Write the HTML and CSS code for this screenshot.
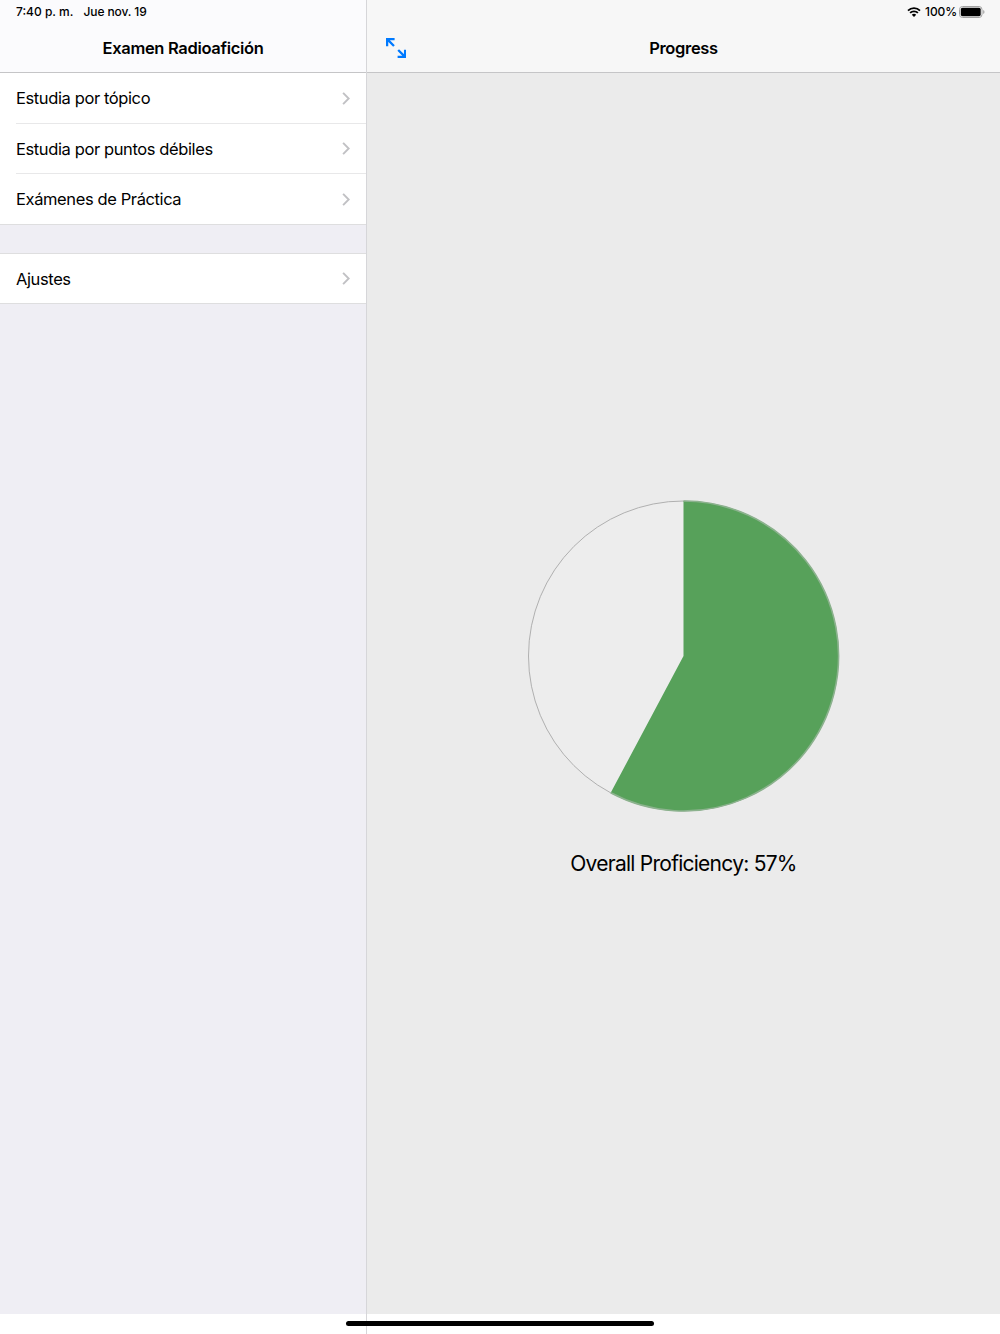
FILE: index.html
```html
<!DOCTYPE html>
<html lang="es">
<head>
<meta charset="utf-8">
<title>Examen Radioafición</title>
<link rel="stylesheet" href="styles.css">
</head>
<body>
<div class="app">
  <aside class="sidebar">
    <header class="bar">
      <div class="status"><span class="time">7:40 p. m.</span><span class="date">Jue nov. 19</span></div>
      <h1 class="title">Examen Radioafición</h1>
    </header>
    <nav class="menu">
      <ul class="group">
        <li class="row first"><span>Estudia por tópico</span><svg class="chevron" viewBox="0 0 8 13"><path d="M1.1.9 6.7 6.5 1.1 12.1"/></svg></li>
        <li class="row"><span>Estudia por puntos débiles</span><svg class="chevron" viewBox="0 0 8 13"><path d="M1.1.9 6.7 6.5 1.1 12.1"/></svg></li>
        <li class="row"><span>Exámenes de Práctica</span><svg class="chevron" viewBox="0 0 8 13"><path d="M1.1.9 6.7 6.5 1.1 12.1"/></svg></li>
      </ul>
      <ul class="group settings">
        <li class="row"><span>Ajustes</span><svg class="chevron" viewBox="0 0 8 13"><path d="M1.1.9 6.7 6.5 1.1 12.1"/></svg></li>
      </ul>
    </nav>
  </aside>
  <main class="detail">
    <header class="bar">
      <div class="status status-right">
        <svg class="wifi" viewBox="0 0 14 10"><path d="M1 3.7a8.5 8.5 0 0 1 12 0M3.1 5.9a5.5 5.5 0 0 1 7.8 0" fill="none" stroke="#000" stroke-width="1.8"/><path d="M7 10 4.8 7.8a3.1 3.1 0 0 1 4.4 0z"/></svg>
        <span class="charge">100%</span>
        <svg class="battery" viewBox="0 0 26 12"><rect x=".5" y=".5" width="22.5" height="11" rx="3" fill="none" stroke="#a2a2a2"/><rect x="1.8" y="1.8" width="19.9" height="8.4" rx="1.6"/><path d="M24.2 4v4q1.3-.6 1.3-2t-1.3-2" fill="#a2a2a2"/></svg>
      </div>
      <div class="toolbar">
        <svg class="expand" viewBox="0 0 20 20"><path d="M1.1 8.3V1.1H8.6M1.4 1.4 8 8M19.1 11.7v7.2h-7.5M18.8 18.6 12.2 12"/></svg>
        <h2 class="title">Progress</h2>
      </div>
    </header>
    <section class="content">
      <svg class="pie" viewBox="-155.5 -156 312 312">
        <circle r="155" fill="#ededed" stroke="#b0b0b0" cx="0"/>
        <path d="M0 0V-155A155 155 0 1 1-72.8 136.8Z" fill="#57a15a"/>
        <path d="M0-155A155 155 0 1 1-72.8 136.8" fill="none" stroke="#8bb28d" stroke-width="1.6"/>
      </svg>
      <p class="score">Overall Proficiency: 57%</p>
    </section>
  </main>
  <div class="home"></div>
</div>
</body>
</html>
```
FILE: styles.css
```css
* { box-sizing: border-box; margin: 0; padding: 0; }
body { font-family: Inter, "Liberation Sans", sans-serif; color: #000; background: #fff; }
.app { position: relative; display: flex; width: 1000px; height: 1334px; overflow: hidden; }
.sidebar { display: flex; flex-direction: column; width: 367px; border-right: 1px solid #d6d6d9; }
.detail { display: flex; flex-direction: column; flex: 1; }
.bar { display: flex; flex-direction: column; height: 73px; background: #f7f7f7; border-bottom: 1px solid #c5c5c7; }
.sidebar .bar { background: #fbfbfd; }
.status { display: flex; align-items: center; height: 24px; padding-left: 16px; padding-bottom: 1px; font-size: 12px; font-weight: 500; white-space: nowrap; }
.time { width: 67.5px; }
.date { letter-spacing: -0.1px; }
.status-right { justify-content: flex-end; padding-right: 15px; }
.wifi { width: 14px; height: 10px; margin-right: 4px; }
.charge { letter-spacing: -0.1px; margin-right: 2px; }
.battery { width: 26px; height: 12px; }
.title { flex: 1; display: flex; justify-content: center; align-items: center; font-size: 16.5px; font-weight: 600; letter-spacing: -0.32px; white-space: nowrap; }
.toolbar { flex: 1; display: flex; align-items: center; padding: 0 20px 0 19px; }
.toolbar .title { height: 48px; padding-right: 19px; }
.expand { width: 20px; height: 20px; fill: none; stroke: #007aff; stroke-width: 2.3; }
.menu { height: 1241px; background: #efeef4; }
.group { list-style: none; background: #fff; border-bottom: 1px solid #dededf; }
.row { display: flex; align-items: center; justify-content: space-between; height: 50px; margin-left: 16px; padding-right: 16px; border-bottom: 1px solid #e8e8e9; font-size: 16.5px; letter-spacing: -0.39px; white-space: nowrap; }
.first { height: 51px; }
.row:last-child { border-bottom: 0; }
.settings { margin-top: 28px; border-top: 1px solid #dededf; }
.settings .row { height: 49px; }
.chevron { width: 8px; height: 13px; fill: none; stroke: #c1c1c4; stroke-width: 1.9; }
.content { display: flex; flex-direction: column; align-items: center; height: 1241px; padding-top: 427px; background: #ebebeb; }
.pie { width: 312px; height: 312px; }
.score { margin-top: 37px; font-size: 21px; line-height: 30px; letter-spacing: -0.74px; white-space: nowrap; }
.home { position: absolute; left: 346px; top: 1321px; width: 308px; height: 5px; border-radius: 3px; background: #000; }
```
